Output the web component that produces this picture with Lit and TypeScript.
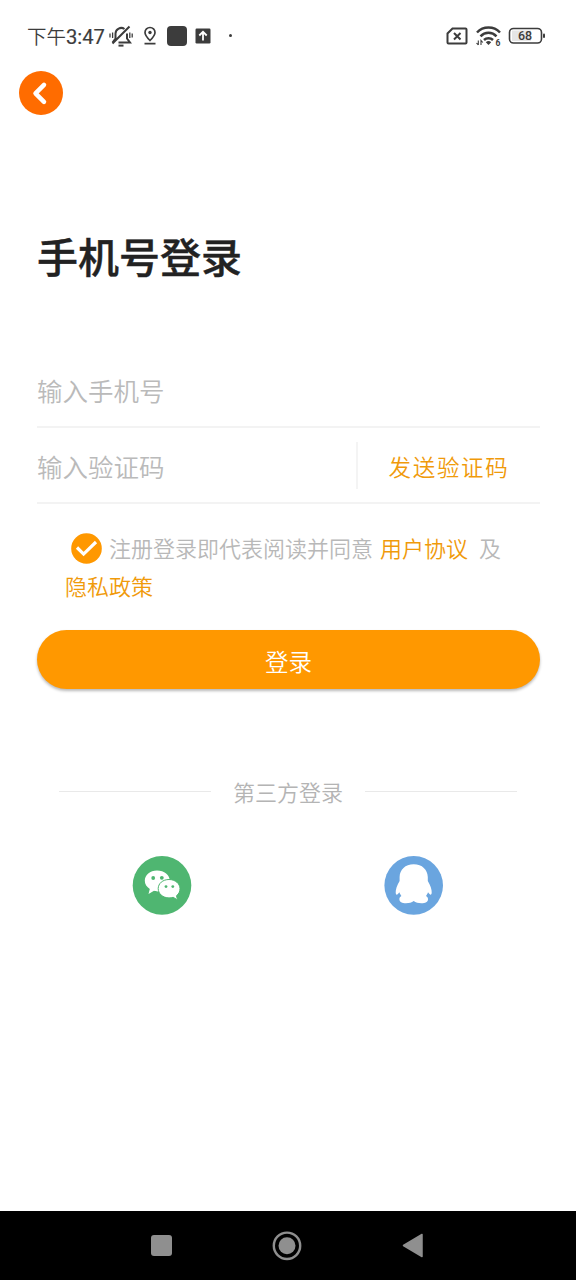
import { LitElement, html, css } from "lit";
import { customElement } from "lit/decorators.js";

@customElement("status-bar")
class StatusBar extends LitElement {
  static styles = css`
    :host { display: block; height: 71px; box-sizing: border-box; padding: 21px 30px 0 27px; }
    .row { display: flex; align-items: center; height: 29px; color: #3c3c3c; }
    .time { font: 400 20px/28px Roboto, "Noto Sans CJK SC", sans-serif; white-space: nowrap; width: 82px; padding-top: 1px; }
    .cn { font-family: "Noto Sans CJK SC", sans-serif; font-size: 19.5px; font-weight: 350; }
    .num { font-size: 20.2px; font-weight: 400; -webkit-text-stroke: 0.2px #3c3c3c; }
    svg { display: block; flex: none; }
    .pin { margin-left: 10px; }
    .square { margin-left: 10px; width: 20px; height: 20px; border-radius: 4px; background: #3c3c3c; }
    .upload { margin-left: 8px; }
    .dot { margin-left: 18px; width: 3px; height: 3px; border-radius: 50%; background: #3c3c3c; }
    .right { margin-left: auto; display: flex; align-items: center; }
    .wifi { margin-left: 7px; }
    .battery { margin-left: 6px; }
  `;
  render() {
    return html`<div class="row">
      <div class="time"><span class="cn">下午</span><span class="num">3:47</span></div>
      <svg width="24" height="22" viewBox="0 0 24 22" fill="none" stroke="#3c3c3c" stroke-width="2">
        <path d="M9.500 17.500H21l-3-4V8.500M15.500 4a5.700 5.700 0 0 0-9 4.500v5L3.500 17.500M20.500 1.500 3.500 18.500" />
        <path d="M9.500 20.600h5" />
        <path d="M1 8.500v4M3.600 7.500v5.500M20.800 7.500v5.500M23.200 8.500v4" stroke-width="1.300" />
      </svg>
      <svg class="pin" width="14" height="20" viewBox="0 0 14 20" fill="none" stroke="#3c3c3c" stroke-width="1.700">
        <path d="M7 14.500C4 11.500 2 9 2 6.500a5 5 0 0 1 10 0C12 9 10 11.500 7 14.500zM1.500 17.600h11" />
        <circle cx="7" cy="6.500" r="1.700" fill="#3c3c3c" stroke="none" />
      </svg>
      <div class="square"></div>
      <svg class="upload" width="16" height="16" viewBox="0 0 16 16">
        <rect x="0.500" y="0.500" width="15" height="15" rx="1.200" fill="#3c3c3c" />
        <path d="M8 12.500V4M4.300 7.500 8 3.800l3.700 3.700" fill="none" stroke="#fff" stroke-width="1.800" />
      </svg>
      <div class="dot"></div>
      <div class="right">
        <svg width="22" height="18" viewBox="0 0 22 18" fill="none" stroke="#3c3c3c" stroke-width="2">
          <path d="M6.500 1.500h13a1 1 0 0 1 1 1v13a1 1 0 0 1-1 1H2.500a1 1 0 0 1-1-1V6.500z" />
          <path d="m8 6 6.500 6.500M14.500 6 8 12.500" />
        </svg>
        <svg class="wifi" width="27" height="22" viewBox="0 0 27 22" fill="none" stroke="#3c3c3c">
          <path d="M2 7.500a16 16 0 0 1 23 0M5.500 11.300a11 11 0 0 1 16 0M9 15a6.500 6.500 0 0 1 9 0" stroke-width="2.500" />
          <path d="m13.500 20-2.700-2.800a4 4 0 0 1 5.400 0z" fill="#3c3c3c" stroke="none" />
          <path d="M3.300 15.500v4.500M1.500 18l1.800 2M6 20v-4.500l1.800 2" stroke-width="1.100" />
          <text x="20.500" y="20.800" font-family="Roboto, sans-serif" font-size="8.500" font-weight="700" fill="#3c3c3c" stroke="none">6</text>
        </svg>
        <svg class="battery" width="38" height="18" viewBox="0 0 38 18">
          <rect x="4" y="3.500" width="19" height="10.500" fill="#e6e6e6" />
          <rect x="1.500" y="1.500" width="32" height="14.500" rx="4" fill="none" stroke="#3c3c3c" stroke-width="1.600" />
          <rect x="35" y="6.500" width="2" height="4.500" rx="1" fill="#3c3c3c" />
          <text x="17" y="13.300" text-anchor="middle" font-family="Roboto, sans-serif" font-size="12.500" font-weight="500" fill="#3c3c3c">68</text>
        </svg>
      </div>
    </div>`;
  }
}

@customElement("nav-bar")
class NavBar extends LitElement {
  static styles = css`
    :host { display: flex; height: 69px; background: #000; align-items: center; padding: 0 153px 0 151px; justify-content: space-between; box-sizing: border-box; }
    svg { display: block; }
  `;
  render() {
    return html`
      <svg width="21" height="21"><rect width="21" height="21" rx="3" fill="#8f8f8f" /></svg>
      <svg width="30" height="30"><circle cx="15" cy="14.800" r="13.200" fill="none" stroke="#8f8f8f" stroke-width="2.400" /><circle cx="15" cy="14.800" r="8.500" fill="#8f8f8f" /></svg>
      <svg width="21" height="26"><path d="M1.500 12.500 20 1.500v22z" fill="#8f8f8f" stroke="#8f8f8f" stroke-width="1.500" stroke-linejoin="round" /></svg>
    `;
  }
}

@customElement("app-root")
class AppRoot extends LitElement {
  static styles = css`
    :host { display: flex; flex-direction: column; width: 576px; height: 1280px; background: #fff; overflow: hidden; font-family: "Noto Sans CJK SC", sans-serif; }
    main { flex: 1; display: flex; flex-direction: column; }
    svg { display: block; }
    .back { margin-left: 19px; width: 44px; height: 44px; }
    h1 { margin: 110px 0 0 37px; font-size: 41px; line-height: 60px; font-weight: 500; color: #222; -webkit-text-stroke: 0.4px #222; }
    .form { margin: 67px 36px 0 37px; font-size: 25.500px; font-weight: 350; color: #bababa; }
    .field { height: 74px; line-height: 78px; border-bottom: 2px solid #f3f3f3; display: flex; align-items: center; }
    .hint { height: 76px; }
    .send { margin-left: auto; width: 184px; height: 47px; line-height: 48px; box-sizing: border-box; border-left: 2px solid #f4f4f4; padding-left: 30.500px; font-size: 22.500px; letter-spacing: 1.700px; font-weight: 350; color: #f09a0a; }
    .agree { margin: 25px 65px 0 65px; font-size: 22px; line-height: 36px; color: #b8b8b8; font-weight: 350; }
    .line { display: flex; align-items: center; height: 38px; white-space: nowrap; }
    .line span { height: 38px; }
    .check { margin: 0 7px 0 6px; }
    .link { color: #f09a0a; }
    .user { margin: 0 11px 0 7px; }
    .login { margin: 25px 36px 0 37px; height: 59px; line-height: 63px; border-radius: 30px; background: #ff9800; color: #fff; text-align: center; font-size: 23.500px; font-weight: 350; box-shadow: 0 2px 3px rgba(0,0,0,.28); }
    .third { display: flex; align-items: center; margin: 82px 59px 0; height: 40px; font-size: 22px; font-weight: 350; color: #b4b4b4; }
    .rule { flex: 1; height: 1px; background: #e9e9e9; }
    .label { margin: 0 22px 0 22px; line-height: 40px; height: 40px; }
    .social { display: flex; justify-content: space-between; margin: 44px 132px 0 132px; }
  `;
  render() {
    return html`
      <status-bar></status-bar>
      <main>
        <svg class="back" viewBox="0 0 44 44"><circle cx="22" cy="22" r="22" fill="#ff6c00" /><path d="m25 13.800-8.500 8.500 8.500 8.500" fill="none" stroke="#fff" stroke-width="4.500" stroke-linecap="round" stroke-linejoin="round" /></svg>
        <h1>手机号登录</h1>
        <div class="form">
          <div class="field"><span class="hint">输入手机号</span></div>
          <div class="field"><span class="hint">输入验证码</span><div class="send">发送验证码</div></div>
        </div>
        <div class="agree">
          <div class="line">
            <svg class="check" width="31" height="31" viewBox="0 0 31 31"><circle cx="15.500" cy="15.500" r="15.300" fill="#ff9800" /><path d="m6 14.500 6.600 6.600L25 9" fill="none" stroke="#fff" stroke-width="3.200" /></svg>
            <span>注册登录即代表阅读并同意</span><span class="link user">用户协议</span><span>及</span>
          </div>
          <div class="line"><span class="link">隐私政策</span></div>
        </div>
        <div class="login">登录</div>
        <div class="third"><div class="rule"></div><div class="label">第三方登录</div><div class="rule"></div></div>
        <div class="social">
          <svg width="60" height="60" viewBox="0 0 60 60">
            <circle cx="30" cy="30.400" r="29.300" fill="#4fb671" />
            <path d="M25 15.500c-7 0-12.200 4.500-12.200 10.200 0 3.500 2 6.200 5 8.200L16.500 39l5.500-3.200c1.300.4 2 .6 3.800.6 6.500 0 12-4.700 12-10.500S32.300 15.500 25 15.500z" fill="#fff" />
            <path d="M37 24.500c-6.200 0-10.800 4-10.800 9.100s4.600 9.300 10.800 9.300c1.500 0 2.900-.2 4.200-.6l4.300 2.600-1-4.200c2.300-1.700 3.500-4.100 3.500-7.100 0-5-4.800-9.100-11-9.100z" fill="#fff" stroke="#4fb671" stroke-width="1" />
            <g fill="#4fb671"><circle cx="21.200" cy="23" r="1.900" /><circle cx="29.800" cy="22.800" r="1.900" /><circle cx="34" cy="31.600" r="1.400" /><circle cx="40.800" cy="31.600" r="1.400" /></g>
          </svg>
          <svg width="60" height="60" viewBox="0 0 60 60">
            <circle cx="29.700" cy="30.400" r="29.300" fill="#6aa5df" />
            <path d="M29.700 9.200c-8.600 0-13.800 5.500-14.100 12.700v4c-2.600 4.500-4.100 8.500-3.900 11.700.1 2.300 1.100 2.600 2.200 1.300l1.500-1.600c.5 1.800 1.300 2.500 2 3.800-1.600.8-2 2-2 3.200 0 2.700 2.600 4 6.600 4 3.200 0 5.700-.8 7.700-2.200 2 1.400 4.500 2.200 7.700 2.200 4 0 6.600-1.300 6.600-4 0-1.200-.4-2.400-2-3.200.7-1.300 1.500-2 2-3.800l1.500 1.600c1.100 1.300 2.100 1 2.200-1.300.2-3.200-1.300-7.200-3.900-11.700v-4C43.500 14.700 38.300 9.200 29.700 9.200z" fill="#fff" />
          </svg>
        </div>
      </main>
      <nav-bar></nav-bar>`;
  }
}
